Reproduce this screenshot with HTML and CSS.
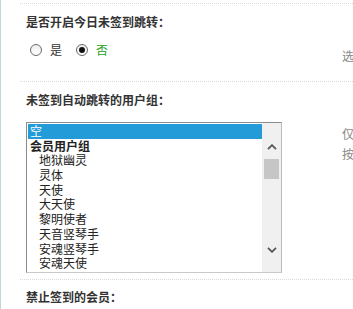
FILE: index.html
```html
<!DOCTYPE html>
<html lang="zh-CN">
<head>
<meta charset="utf-8">
<title>签到设置</title>
<link rel="stylesheet" href="styles.css">
</head>
<body>
<div class="panel">
  <section class="row row-first">
    <div class="main">
      <h3 class="label">是否开启今日未签到跳转：</h3>
      <div class="radios">
        <label class="radio"><span class="dot"></span><span>是</span></label>
        <label class="radio checked"><span class="dot"></span><span class="on">否</span></label>
      </div>
    </div>
    <div class="hint">选</div>
  </section>
  <section class="row row-second">
    <div class="main">
      <h3 class="label">未签到自动跳转的用户组：</h3>
      <div class="listbox">
        <div class="options">
          <div class="opt sel">空</div>
          <div class="opt group">会员用户组</div>
          <div class="opt child">地狱幽灵</div>
          <div class="opt child">灵体</div>
          <div class="opt child">天使</div>
          <div class="opt child">大天使</div>
          <div class="opt child">黎明使者</div>
          <div class="opt child">天音竖琴手</div>
          <div class="opt child">安魂竖琴手</div>
          <div class="opt child">安魂天使</div>
        </div>
        <div class="scrollbar">
          <svg class="arrow up" width="10" height="6" viewBox="0 0 10 6"><polyline points="1,5.2 5,1.2 9,5.2" fill="none" stroke="#555" stroke-width="1.8"/></svg>
          <div class="thumb"></div>
          <svg class="arrow down" width="10" height="6" viewBox="0 0 10 6"><polyline points="1,0.8 5,4.8 9,0.8" fill="none" stroke="#555" stroke-width="1.8"/></svg>
        </div>
      </div>
    </div>
    <div class="hint">仅<br>按</div>
  </section>
  <section class="row row-third">
    <div class="main">
      <h3 class="label">禁止签到的会员：</h3>
    </div>
  </section>
</div>
</body>
</html>
```
FILE: styles.css
```css
* { box-sizing: border-box; }

body {
  margin: 0;
  background: #fff;
  color: #333;
  font-family: "Noto Sans CJK SC", "Noto Sans", sans-serif;
  font-size: 12px;
}

.panel {
  height: 309px;
  overflow: hidden;
  border-left: 1px solid #c3d4dc;
  padding-top: 3px;
}

.row {
  margin-left: 19px;
  padding-left: 6px;
  padding-top: 9px;
  border-top: 1px dotted #dadada;
  display: grid;
  grid-template-columns: 316px 1fr;
}

.row-first { padding-bottom: 15px; }
.row-second { padding-bottom: 6px; }
.row-third { padding-top: 8px; }

.label {
  margin: 0;
  font-size: 12px;
  font-weight: bold;
  line-height: 18px;
  color: #333;
  white-space: nowrap;
}

.hint {
  margin-top: 33px;
  line-height: 20px;
  color: #888;
  white-space: nowrap;
  overflow: hidden;
}

.radios {
  display: flex;
  align-items: center;
  height: 18px;
  margin-top: 10px;
  padding-left: 4px;
}

.radio {
  display: flex;
  align-items: center;
  gap: 8px;
  margin-right: 14px;
  color: #333;
  line-height: 18px;
}

.dot {
  width: 12px;
  height: 12px;
  border: 1px solid #6a6a6a;
  border-radius: 50%;
  background: linear-gradient(#eeeeee, #ffffff);
  display: flex;
  align-items: center;
  justify-content: center;
}

.checked .dot::after {
  content: "";
  width: 6px;
  height: 6px;
  border-radius: 50%;
  background: #111;
}

.on { color: #22a022; }

.listbox {
  margin-top: 13px;
  width: 256px;
  height: 151px;
  border: 1px solid;
  border-color: #8c8c8c #bcbcbc #c9c9c9 #8c8c8c;
  display: flex;
  background: #fff;
}

.options {
  width: 235px;
  padding: 1px 0 0 1px;
  overflow: hidden;
  color: #222;
}

.opt {
  height: 14.7px;
  line-height: 14.7px;
  padding-left: 2px;
  white-space: nowrap;
}

.opt.sel {
  background: #229bd8;
  color: #fff;
}

.opt.group { font-weight: bold; }
.opt.child { padding-left: 11px; }

.scrollbar {
  width: 19px;
  background: #f0f0f0;
  display: flex;
  flex-direction: column;
  align-items: center;
  padding-top: 21px;
}

.arrow { display: block; flex: none; }

.thumb {
  width: 15px;
  height: 20px;
  margin-top: 9px;
  background: #c6c6c6;
}

.arrow.down { margin-top: 68px; }
```
